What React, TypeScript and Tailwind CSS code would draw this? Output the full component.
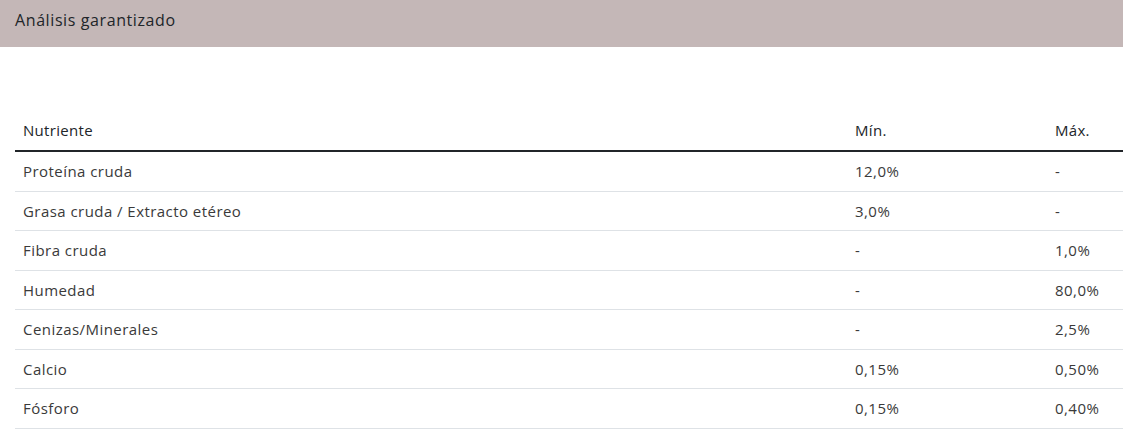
const rows: [string, string, string][] = [
  ['Proteína cruda', '12,0%', '-'],
  ['Grasa cruda / Extracto etéreo', '3,0%', '-'],
  ['Fibra cruda', '-', '1,0%'],
  ['Humedad', '-', '80,0%'],
  ['Cenizas/Minerales', '-', '2,5%'],
  ['Calcio', '0,15%', '0,50%'],
  ['Fósforo', '0,15%', '0,40%'],
];

export default function App() {
  return (
    <div className="w-[1123px] h-[444px] bg-white overflow-hidden font-['Open_Sans',sans-serif] text-[#212529]">
      <div className="h-[47px] bg-[#c4b7b7] px-[15px] pt-[8px] text-[16px] font-medium tracking-[0.6px]">
        Análisis garantizado
      </div>
      <div className="pl-[15px] pt-[64px]">
        <table className="w-full border-collapse text-[15px] leading-[22.5px] tracking-[0.45px]">
          <thead>
            <tr className="border-b-2 border-[#212529]">
              <th className="text-left font-medium px-2 pt-2 pb-[8.5px] tracking-[0.3px]">Nutriente</th>
              <th className="text-left font-medium px-2 pt-2 pb-[8.5px] w-[200px] tracking-[0.3px]">Mín.</th>
              <th className="text-left font-medium px-2 pt-2 pb-[8.5px] w-[76px] tracking-[0.3px]">Máx.</th>
            </tr>
          </thead>
          <tbody className="text-[#3a3a3a]">
            {rows.map(([name, min, max]) => (
              <tr key={name} className="border-b border-[#dee2e6]">
                <td className="px-2 py-2">{name}</td>
                <td className="px-2 py-2">{min}</td>
                <td className="px-2 py-2">{max}</td>
              </tr>
            ))}
          </tbody>
        </table>
      </div>
    </div>
  );
}
